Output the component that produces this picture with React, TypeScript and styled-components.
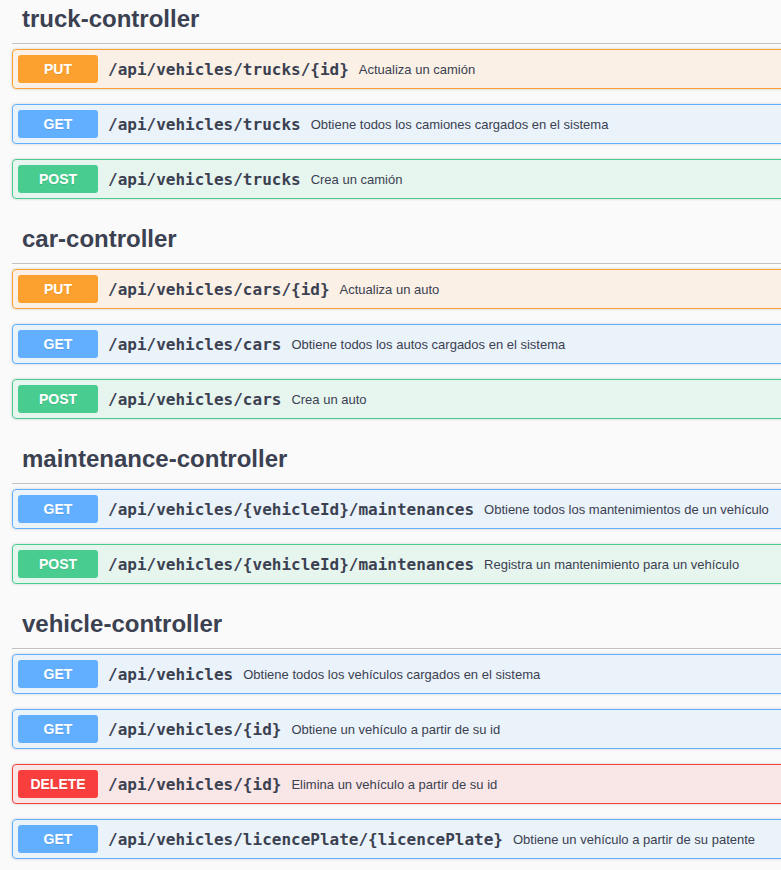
import React from "react";
import styled, { createGlobalStyle } from "styled-components";

const Global = createGlobalStyle`
  html, body {
    margin: 0;
    padding: 0;
    background: #fafafa;
    overflow: hidden;
  }
  body {
    font-family: "Liberation Sans", Arial, sans-serif;
    color: #3b4151;
  }
`;

type Method = "GET" | "POST" | "PUT" | "DELETE";

const colors: Record<Method, { main: string; bg: string }> = {
  GET: { main: "#61affe", bg: "rgba(97,175,254,.1)" },
  POST: { main: "#49cc90", bg: "rgba(73,204,144,.1)" },
  PUT: { main: "#fca130", bg: "rgba(252,161,48,.1)" },
  DELETE: { main: "#f93e3e", bg: "rgba(249,62,62,.1)" },
};

const Page = styled.div`
  width: 900px;
  margin: -6px 0 0 12px;
  display: flex;
  flex-direction: column;
`;

const Section = styled.section`
  display: flex;
  flex-direction: column;
`;

const TagTitle = styled.h3`
  margin: 0 0 5px;
  padding: 10px 20px 10px 10px;
  font-family: "Liberation Sans", Arial, sans-serif;
  font-size: 24px;
  font-weight: 700;
  line-height: 29px;
  color: #3b4151;
  border-bottom: 1px solid rgba(59, 65, 81, 0.3);
`;

const Ops = styled.div`
  display: flex;
  flex-direction: column;
`;

const OpBlock = styled.div<{ $m: Method }>`
  margin: 0 0 15px;
  border: 1px solid ${(p) => colors[p.$m].main};
  background: ${(p) => colors[p.$m].bg};
  border-radius: 4px;
  box-shadow: 0 0 3px rgba(0, 0, 0, 0.19);
  padding: 5px;
  display: flex;
  align-items: center;
`;

const MethodBadge = styled.span<{ $m: Method }>`
  min-width: 80px;
  padding: 6px 0;
  border-radius: 3px;
  background: ${(p) => colors[p.$m].main};
  color: #fff;
  font-family: "Liberation Sans", Arial, sans-serif;
  font-size: 14px;
  font-weight: 700;
  line-height: 16px;
  text-align: center;
  text-shadow: 0 1px 0 rgba(0, 0, 0, 0.1);
`;

const Path = styled.span`
  padding: 0 10px;
  font-family: "DejaVu Sans Mono", monospace;
  font-size: 16px;
  font-weight: 600;
  color: #3b4151;
  white-space: nowrap;
`;

const Desc = styled.span`
  font-family: "Liberation Sans", Arial, sans-serif;
  font-size: 13px;
  color: #3b4151;
  white-space: nowrap;
`;

type Op = { m: Method; path: string; desc: string };

const sections: { tag: string; ops: Op[] }[] = [
  {
    tag: "truck-controller",
    ops: [
      { m: "PUT", path: "/api/vehicles/trucks/{id}", desc: "Actualiza un camión" },
      { m: "GET", path: "/api/vehicles/trucks", desc: "Obtiene todos los camiones cargados en el sistema" },
      { m: "POST", path: "/api/vehicles/trucks", desc: "Crea un camión" },
    ],
  },
  {
    tag: "car-controller",
    ops: [
      { m: "PUT", path: "/api/vehicles/cars/{id}", desc: "Actualiza un auto" },
      { m: "GET", path: "/api/vehicles/cars", desc: "Obtiene todos los autos cargados en el sistema" },
      { m: "POST", path: "/api/vehicles/cars", desc: "Crea un auto" },
    ],
  },
  {
    tag: "maintenance-controller",
    ops: [
      { m: "GET", path: "/api/vehicles/{vehicleId}/maintenances", desc: "Obtiene todos los mantenimientos de un vehículo" },
      { m: "POST", path: "/api/vehicles/{vehicleId}/maintenances", desc: "Registra un mantenimiento para un vehículo" },
    ],
  },
  {
    tag: "vehicle-controller",
    ops: [
      { m: "GET", path: "/api/vehicles", desc: "Obtiene todos los vehículos cargados en el sistema" },
      { m: "GET", path: "/api/vehicles/{id}", desc: "Obtiene un vehículo a partir de su id" },
      { m: "DELETE", path: "/api/vehicles/{id}", desc: "Elimina un vehículo a partir de su id" },
      { m: "GET", path: "/api/vehicles/licencePlate/{licencePlate}", desc: "Obtiene un vehículo a partir de su patente" },
    ],
  },
];

export default function App() {
  return (
    <>
      <Global />
      <Page>
        {sections.map((s) => (
          <Section key={s.tag}>
            <TagTitle>{s.tag}</TagTitle>
            <Ops>
              {s.ops.map((o, i) => (
                <OpBlock key={i} $m={o.m}>
                  <MethodBadge $m={o.m}>{o.m}</MethodBadge>
                  <Path>{o.path}</Path>
                  <Desc>{o.desc}</Desc>
                </OpBlock>
              ))}
            </Ops>
          </Section>
        ))}
      </Page>
    </>
  );
}
